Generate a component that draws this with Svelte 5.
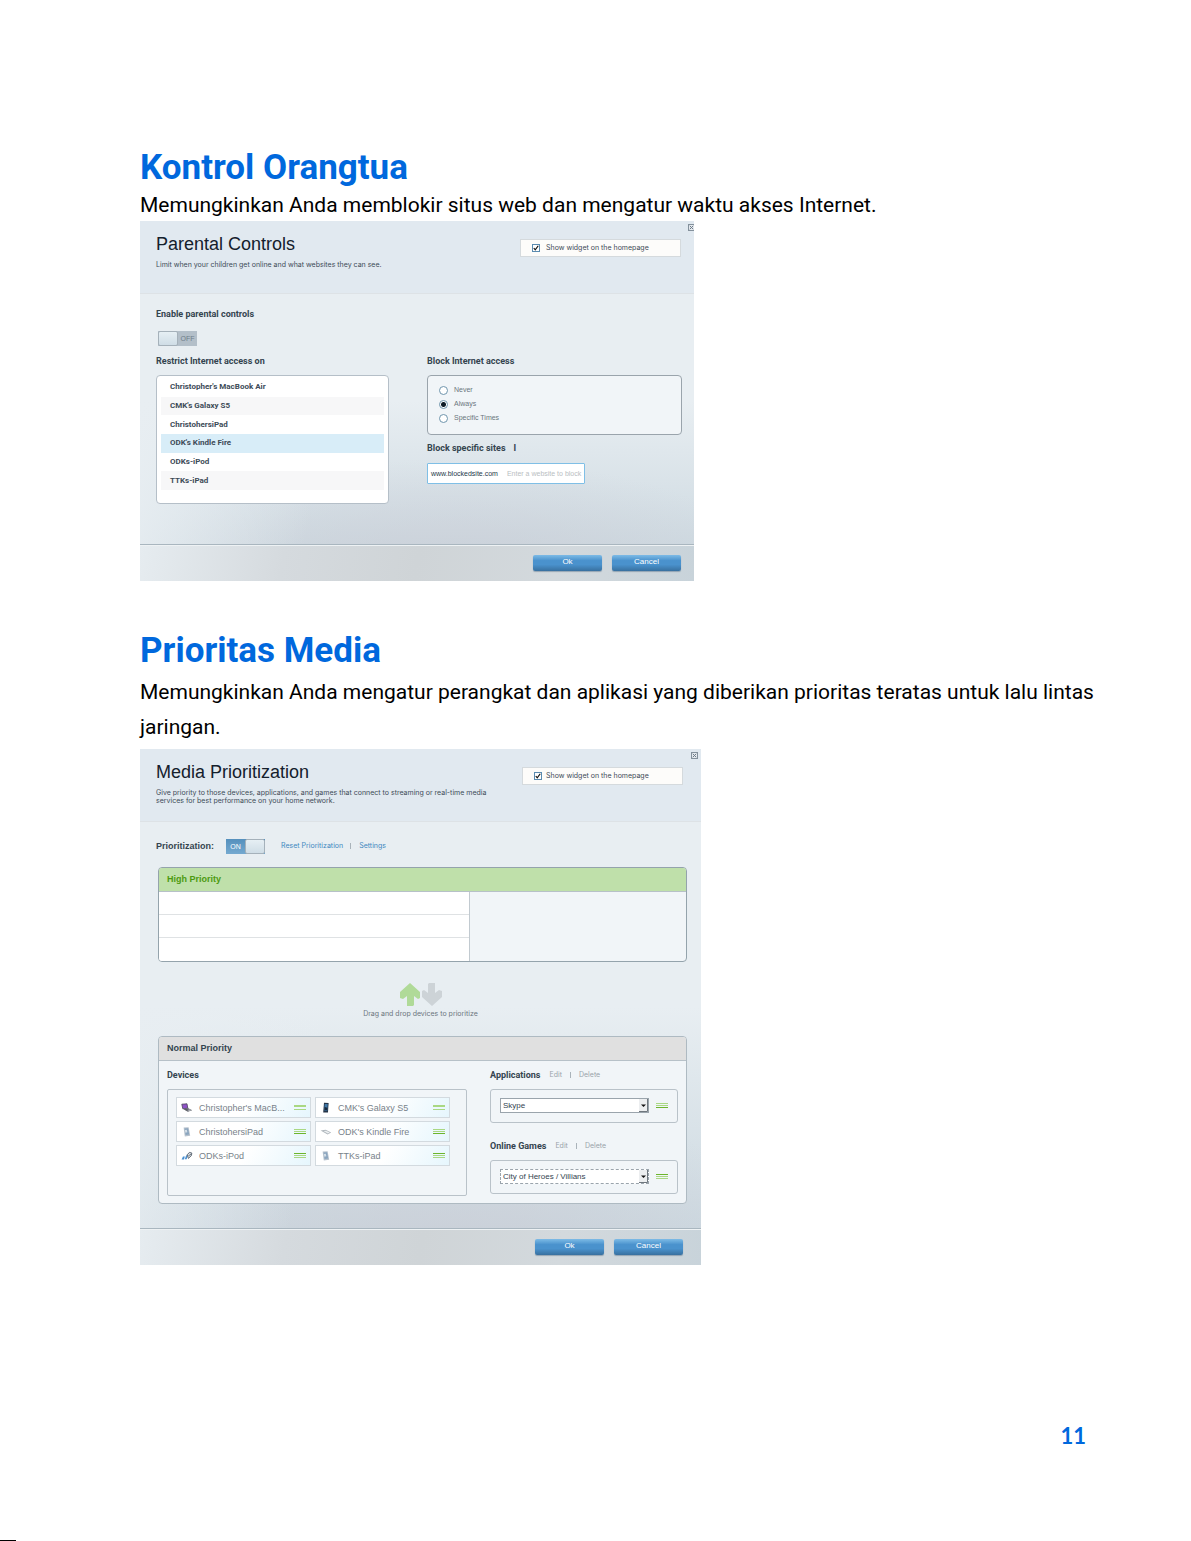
<script>
  const restricted = [
    "Christopher's MacBook Air",
    "CMK's Galaxy S5",
    'ChristohersiPad',
    "ODK's Kindle Fire",
    'ODKs-iPod',
    'TTKs-iPad'
  ]
  const selected = "ODK's Kindle Fire"
  const times = ['Never', 'Always', 'Specific Times']
  const devices = [
    { name: "Christopher's MacB...", icon: 'laptop', grip: 'pale' },
    { name: "CMK's Galaxy S5", icon: 'phone', grip: 'pale' },
    { name: 'ChristohersiPad', icon: 'tablet', grip: 'low' },
    { name: "ODK's Kindle Fire", icon: 'reader', grip: 'low' },
    { name: 'ODKs-iPod', icon: 'pod', grip: 'high' },
    { name: 'TTKs-iPad', icon: 'tablet', grip: 'high' }
  ]
  const pickers = [
    { id: 'apps', label: 'Applications', value: 'Skype', grip: 'low' },
    { id: 'games', label: 'Online Games', value: 'City of Heroes / Villians', grip: 'high', focused: true }
  ]

  let blockTime = $state('Always')
  let parentalOn = $state(false)
  let priorityOn = $state(true)
  let parentalWidget = $state(true)
  let mediaWidget = $state(true)
</script>

{#snippet closeIcon()}
  <button class="close" aria-label="Close">
    <svg viewBox="0 0 7 7" width="7" height="7">
      <rect x=".5" y=".5" width="6" height="6" fill="#e4e9ee" stroke="#84919c" />
      <path d="M1.8 1.8l3.4 3.4M5.2 1.8L1.8 5.2" stroke="#6d7a86" />
    </svg>
  </button>
{/snippet}

{#snippet grip(kind)}
  <svg viewBox="0 0 12 5" width="12" height="5" aria-hidden="true">
    {#if kind === 'pale'}
      <path d="M0 0h12v2H0zM0 4h12v1H0z" fill="#a9d883" />
    {:else}
      <path d="M0 0h12v1H0z" fill={kind === 'high' ? '#6cb52d' : '#a9d883'} />
      <path d="M0 2h12v1H0z" fill="#a9d883" />
      <path d="M0 4h12v1H0z" fill={kind === 'high' ? '#a9d883' : '#6cb52d'} />
    {/if}
  </svg>
{/snippet}

{#snippet deviceIcon(kind)}
  <svg viewBox="0 0 12 12" width="12" height="12" aria-hidden="true">
    {#if kind === 'laptop'}
      <path d="M.8 2.2l5.2-.4.8 4.4-5 .6z" fill="#8f52c8" stroke="#4a4658" stroke-width=".8" />
      <path d="M2.4 7.2l5-.9 3.8 2-4.4 1.5z" fill="#5b5e66" />
      <path d="M6 8l3-.7 1.6.9-2.4.9z" fill="#b4b8be" />
    {:else if kind === 'phone'}
      <path d="M4 .8l4.6.2-.6 9.6-4.8-.2z" fill="#243447" />
      <path d="M4.7 2l3 .1-.4 6.6-3.1-.1z" fill="#3f78a8" />
      <path d="M4.6 5l2.8.8-.2 2.4-2.7-.1z" fill="#17283c" />
    {:else if kind === 'tablet'}
      <path d="M2.6 1.6l5-.4 1.6 8.6-5.4.6z" fill="#b7c2cd" />
      <path d="M3.6 2.6l3.4-.3 1.2 6.2-3.6.4z" fill="#8aa5bf" />
      <path d="M3.8 4l2-.3.6 2.6-2 .4z" fill="#d4dfe8" />
    {:else if kind === 'reader'}
      <path d="M.6 4.4l5-.6 5.6 2.6-3.6 2z" fill="#aeb5bb" />
      <path d="M3.4 5l2.6-.3 3.8 1.7-2 1z" fill="#eceff1" />
    {:else}
      <path d="M.6 9.4l1.4-3h1.8l-.8 3z" fill="#4a8fd0" />
      <path d="M3.8 9.2l1.4-4 1.6.4-1.2 3.6z" fill="#4a8fd0" />
      <path d="M6.2 4.8l2.2-2.4 2.4.6-.4 2.6-3 2.8z" fill="#d9dee2" stroke="#55606c" stroke-width=".9" />
      <path d="M7.4 5.8l2.8-1.6" stroke="#55606c" stroke-width=".8" />
    {/if}
  </svg>
{/snippet}

{#snippet actions()}
  <footer class="actions">
    <button class="primary">Ok</button>
    <button class="primary">Cancel</button>
  </footer>
{/snippet}

<main>
  <section>
    <h1>Kontrol Orangtua</h1>
    <p class="intro">Memungkinkan Anda memblokir situs web dan mengatur waktu akses Internet.</p>

    <article class="panel parental">
      <header class="top">
        <div class="titles">
          <h2>Parental Controls</h2>
          <p>Limit when your children get online and what websites they can see.</p>
        </div>
        <label class="widget">
          <input type="checkbox" bind:checked={parentalWidget} />
          Show widget on the homepage
        </label>
        {@render closeIcon()}
      </header>

      <div class="body">
        <h3 id="enable">Enable parental controls</h3>
        <button
          class="toggle"
          role="switch"
          aria-checked={parentalOn}
          aria-labelledby="enable"
          onclick={() => (parentalOn = !parentalOn)}
        >
          <span class="knob"></span><span class="state">OFF</span>
        </button>

        <div class="columns">
          <div>
            <h3>Restrict Internet access on</h3>
            <ul class="list">
              {#each restricted as name}
                <li class:selected={name === selected}>{name}</li>
              {/each}
            </ul>
          </div>
          <div>
            <h3 id="block">Block Internet access</h3>
            <div class="radios" role="radiogroup" aria-labelledby="block">
              {#each times as time}
                <label><input type="radio" name="time" value={time} bind:group={blockTime} />{time}</label>
              {/each}
            </div>
            <h3 class="sites"><label for="site">Block specific sites</label><span>I</span></h3>
            <div class="site">
              <span>www.blockedsite.com</span>
              <input id="site" type="text" placeholder="Enter a website to block" />
            </div>
          </div>
        </div>
      </div>
      {@render actions()}
    </article>
  </section>

  <section class="second">
    <h1>Prioritas Media</h1>
    <p class="intro tall">Memungkinkan Anda mengatur perangkat dan aplikasi yang diberikan prioritas teratas untuk lalu lintas jaringan.</p>

    <article class="panel media">
      <header class="top">
        <div class="titles">
          <h2>Media Prioritization</h2>
          <p>Give priority to those devices, applications, and games that connect to streaming or real-time media services for best performance on your home network.</p>
        </div>
        <label class="widget">
          <input type="checkbox" bind:checked={mediaWidget} />
          Show widget on the homepage
        </label>
        {@render closeIcon()}
      </header>

      <div class="body">
        <div class="switchrow">
          <h3 id="prio">Prioritization:</h3>
          <button
            class="toggle on"
            role="switch"
            aria-checked={priorityOn}
            aria-labelledby="prio"
            onclick={() => (priorityOn = !priorityOn)}
          >
            <span class="state">ON</span><span class="knob"></span>
          </button>
          <a href="#reset">Reset Prioritization</a>
          <i></i>
          <a href="#settings">Settings</a>
        </div>

        <div class="group high">
          <h3>High Priority</h3>
          <div class="slots">
            <ul><li></li><li></li><li></li></ul>
            <div></div>
          </div>
        </div>

        <div class="hint">
          <svg viewBox="0 0 42 23" width="42" height="23" aria-hidden="true">
            <path d="M10 0L20 9v6l-2 1-4-3v9l-1 1H7V13l-4 3-3-1V9z" fill="#b0da98" />
            <path d="M32 23L22 14V8l2-1 4 3V1l1-1h6v10l4-3 3 1v6z" fill="#cdd3d7" />
          </svg>
          <p>Drag and drop devices to prioritize</p>
        </div>

        <div class="group normal">
          <h3>Normal Priority</h3>
          <div class="split">
            <div>
              <h4>Devices</h4>
              <ul class="devices">
                {#each devices as device}
                  <li>
                    {@render deviceIcon(device.icon)}
                    <span>{device.name}</span>
                    {@render grip(device.grip)}
                  </li>
                {/each}
              </ul>
            </div>
            <div class="pickers">
              {#each pickers as picker}
                <div>
                  <h4>
                    <label for={picker.id}>{picker.label}</label>
                    <a href="#edit">Edit</a><i></i><a href="#delete">Delete</a>
                  </h4>
                  <div class="picker">
                    <div class="select" class:focused={picker.focused}>
                      <select id={picker.id}><option>{picker.value}</option></select>
                      <svg viewBox="0 0 9 13" width="9" height="13" aria-hidden="true">
                        <path d="M0 0h9v13H0z" fill="#eceef0" />
                        <path d="M8.5 0v12.5H0" fill="none" stroke="#6f777e" />
                        <path d="M2 5.5h5L4.500 8z" fill="#111" />
                      </svg>
                    </div>
                    {@render grip(picker.grip)}
                  </div>
                </div>
              {/each}
            </div>
          </div>
        </div>
      </div>
      {@render actions()}
    </article>
  </section>

  <p class="pageno">11</p>
</main>
<div class="mark"></div>

<style>
  :global(body) { margin: 0; background: #fff; }
  main {
    padding: 146px 90px 0 140px;
    font-family: Roboto, sans-serif;
    color: #000;
  }
  h1, h2, h3, h4, p, ul { margin: 0; padding: 0; }
  ul { list-style: none; }
  button, input, select { font: inherit; margin: 0; padding: 0; }
  a { text-decoration: none; }
  i { width: 1px; height: 6px; background: #a9b3ba; }

  h1 { font-size: 35px; line-height: 43px; font-weight: 700; color: #0068dd; }
  .intro { font-size: 21px; line-height: 32px; }
  .intro.tall { line-height: 35px; padding: 3px 0 4px; }
  .second { padding-top: 48px; }

  /* router dialogs */
  .panel {
    font: 8px/10px 'Liberation Sans', Arial, sans-serif;
    color: #3d4b57;
    background:
      linear-gradient(100deg, #e8eef2 4%, transparent 36%),
      radial-gradient(60% 34% at 56% 100%, rgba(202, 205, 214, .8), transparent),
      linear-gradient(#e8eef2 50%, #c8d5dd);
  }
  .parental { max-width: 554px; }
  .media { max-width: 561px; }
  .top {
    position: relative;
    display: flex;
    justify-content: space-between;
    height: 72px;
    padding-left: 16px;
    background: #e1e9f0;
    border-bottom: 1px solid #dde2e6;
  }
  .titles { max-width: 345px; }
  h2 { margin-top: 12px; font-size: 18px; line-height: 22px; font-weight: 400; color: #14202c; }
  .titles p, .widget, .hint, .switchrow a, h4 a { font-family: Inter, sans-serif; font-size: 7px; }
  .titles p { margin-top: 6px; line-height: 8px; }
  .widget {
    display: flex;
    align-items: center;
    gap: 6px;
    box-sizing: border-box;
    width: 161px;
    height: 18px;
    margin: 18px 13px 0 0;
    padding-left: 11px;
    background: #fdfcfa;
    border: 1px solid #d5dadd;
  }
  .media .widget { margin-right: 18px; gap: 4px; }
  .widget input {
    appearance: none;
    width: 8px;
    height: 8px;
    border: 1px solid #5a8bb0;
    background: #fff url("data:image/svg+xml,%3Csvg xmlns='http://www.w3.org/2000/svg' viewBox='0 0 8 8'%3E%3Cpath d='M1 4l2 2.500L7 1' fill='none' stroke='%23111' stroke-width='1.600'/%3E%3C/svg%3E");
  }
  .widget input:not(:checked) { background-image: none; }
  .close { position: absolute; top: 3px; right: 3px; display: flex; border: 0; background: none; }
  .parental .close { right: -1px; }
  .parental .top { overflow: hidden; }

  .body { padding: 0 12px 0 16px; }
  h3, h4 { font-size: 9px; line-height: 12px; font-weight: 700; color: #34444f; }
  .parental h3, h4, .list { font-family: Roboto, sans-serif; }

  .toggle {
    display: flex;
    width: 39px;
    height: 15px;
    border: 0;
    font-size: 7px;
    line-height: 15px;
    color: #6f7e8a;
    background: #b3bfc9;
  }
  .toggle .state { flex: 1; }
  .knob {
    box-sizing: border-box;
    width: 20px;
    height: 15px;
    border: 1px solid #a5b1ba;
    border-radius: 2px;
    background: linear-gradient(#e6eff4, #cfdde6);
  }
  .toggle.on { color: #fff; background: linear-gradient(#5590bd, #74a9d0); }

  .parental .body { padding-top: 14px; height: 236px; }
  .parental .toggle { margin: 11px 0 9px 2px; }
  .columns { display: grid; grid-template-columns: 233px 255px; gap: 38px; }
  .list {
    display: grid;
    grid-template-rows: repeat(6, 1fr);
    box-sizing: border-box;
    height: 129px;
    margin-top: 8px;
    padding: 2px 4px 13px;
    background: #fff;
    border: 1px solid #b5bfc8;
    border-radius: 4px;
  }
  .list li { display: flex; align-items: center; padding-left: 9px; font-weight: 700; }
  .list li:nth-child(even) { background: #f7f7f8; }
  .list li.selected { background: #d8edf8; }
  .radios {
    display: flex;
    flex-direction: column;
    box-sizing: border-box;
    height: 60px;
    margin-top: 8px;
    padding: 7px 11px;
    background: #f1f5f8;
    border: 1px solid #9aa4ac;
    border-radius: 4px;
    font-size: 7px;
    line-height: 14px;
    color: #6b757d;
  }
  .radios label { display: flex; align-items: center; gap: 6px; }
  .radios input {
    appearance: none;
    width: 9px;
    height: 9px;
    border: 1px solid #6f95ad;
    border-radius: 50%;
    background: #fff;
  }
  .radios input:checked { background: radial-gradient(#0c1a26 2px, #fff 3px); }
  .sites { display: flex; gap: 8px; margin-top: 7px; }
  .site {
    display: flex;
    align-items: center;
    gap: 9px;
    box-sizing: border-box;
    width: 158px;
    height: 21px;
    margin-top: 9px;
    padding-left: 3px;
    border: 1px solid #7fbfe6;
    border-radius: 1px;
    background: #fff;
    font-size: 7px;
    color: #25394a;
  }
  .site input { flex: 1; min-width: 0; border: 0; outline: 0; background: none; }
  .site input::placeholder { color: #b9bec2; opacity: 1; }

  .actions {
    display: flex;
    justify-content: flex-end;
    gap: 10px;
    height: 26px;
    padding: 10px 13px 0 0;
    border-top: 1px solid #a9b6bf;
    box-shadow: inset 0 1px #eef2f4;
    background: linear-gradient(100deg, #e6ecf0, #d5dade 26%, #cfd4d7 50%, #d3d9dd 75%, #c8d3da);
  }
  .media .actions { padding-right: 18px; }
  .primary {
    width: 69px;
    height: 16px;
    padding-bottom: 3px;
    border: 0;
    border-radius: 2px;
    color: #fff;
    background: linear-gradient(#7dbbe6, #4a92cd 35%, #4a92cd 60%, #38709f);
    box-shadow: 0 1px 1px rgba(60, 90, 120, .4);
  }

  .media .body { height: 390px; padding: 16px 14px 0 18px; }
  .switchrow { display: flex; align-items: center; height: 16px; margin-left: -2px; }
  .switchrow .toggle { margin: 0 16px 0 12px; }
  .switchrow a { color: #3f88c0; }
  .switchrow i { margin: 0 8px 0 7px; }
  .group {
    border: 1px solid #aebac2;
    border-radius: 4px;
    background: #f1f5f8;
    overflow: hidden;
  }
  .group h3 { padding: 5px 8px 6px; border-bottom: 1px solid #b7c1c8; }
  .high { margin-top: 13px; border-color: #94a3ac; }
  .high h3 { background: #bfe0aa; color: #4c9a10; }
  .slots { display: grid; grid-template-columns: 311px 1fr; }
  .slots ul { background: #fff; border-right: 1px solid #c2cad0; }
  .slots li { height: 22px; border-bottom: 1px solid #dfe2e4; }
  .slots li:last-child { height: 23px; border: 0; }
  .hint { padding: 21px 4px 16px 0; text-align: center; line-height: 12px; color: #6b757d; }
  .hint svg { display: block; margin: 0 auto 2px; }
  .normal h3 { background: #e0e0e0; }
  .split { display: grid; grid-template-columns: 300px 187px; gap: 23px; padding: 8px 8px 7px; }
  h4 { display: flex; align-items: center; }
  h4 a { font-weight: 400; color: #99a3aa; }
  h4 label { margin-right: 9px; }
  h4 i { margin: 0 8px; }
  .devices {
    display: grid;
    grid-template-columns: 135px 135px;
    grid-auto-rows: 21px;
    gap: 3px 4px;
    box-sizing: border-box;
    height: 107px;
    margin-top: 8px;
    padding: 7px 8px;
    border: 1px solid #b9c2c9;
    border-radius: 2px;
  }
  .devices li {
    display: flex;
    align-items: center;
    padding: 0 4px;
    background: linear-gradient(120deg, #fff 50%, #e6f6fd);
    border: 1px solid #d3dadf;
    font-size: 9px;
    color: #78828a;
  }
  .devices span { flex: 1; margin-left: 6px; white-space: nowrap; }
  .pickers { display: grid; gap: 17px; align-content: start; }
  .picker {
    display: flex;
    align-items: center;
    gap: 7px;
    box-sizing: border-box;
    height: 34px;
    margin-top: 8px;
    padding: 0 9px 1px;
    border: 1px solid #b9c2c9;
    border-radius: 3px;
  }
  .select { display: flex; width: 147px; border: 1px solid #9aa4ac; background: #fff; }
  .select.focused { border-style: dashed; }
  .select select { flex: 1; height: 13px; padding-left: 2px; appearance: none; border: 0; outline: 0; background: none; color: #34444f; }

  .pageno { margin-top: 158px; padding-right: 15px; text-align: right; font-family: Lato, sans-serif; font-size: 22px; line-height: 26px; font-weight: 700; color: #0068dd; }
  .mark { width: 16px; height: 1px; margin-top: 91px; background: #000; }
</style>
